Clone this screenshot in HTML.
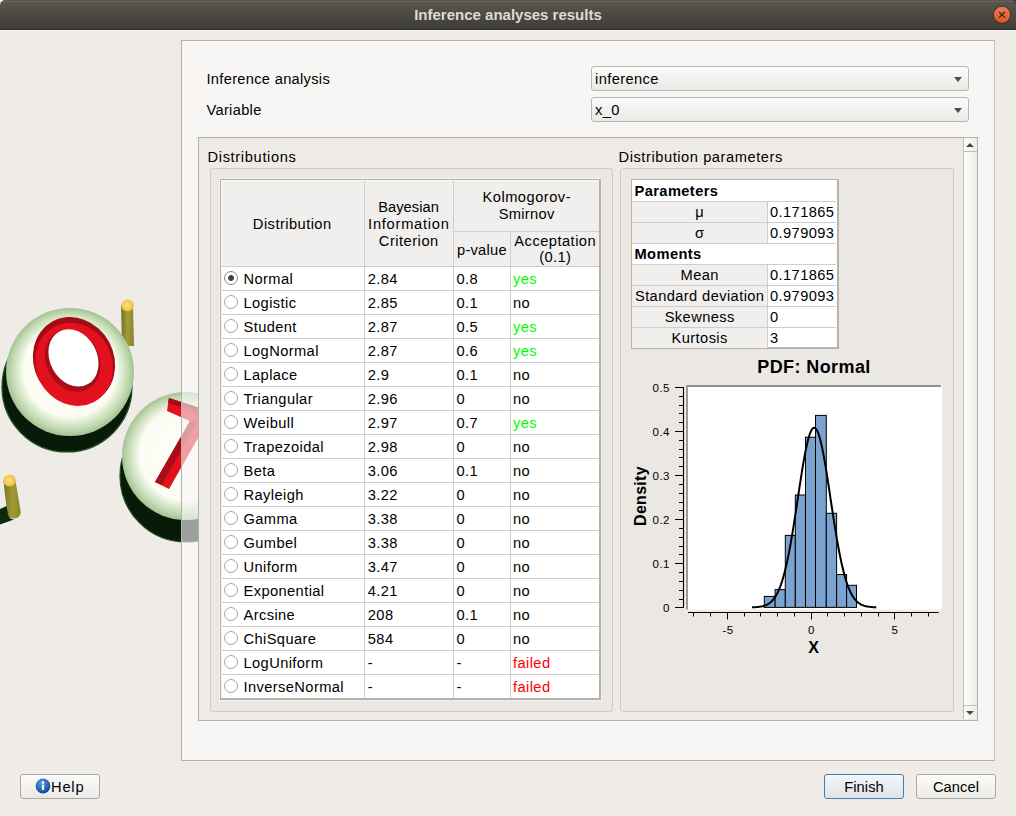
<!DOCTYPE html>
<html><head><meta charset="utf-8"><style>
html,body{margin:0;padding:0;}
body{width:1016px;height:816px;position:relative;overflow:hidden;background:#efebe7;font-family:"Liberation Sans", sans-serif;}
</style></head><body>
<div style="position:absolute;left:1008px;top:0px;width:8px;height:8px;background:#3a3934;"></div>
<div style="position:absolute;left:0;top:0;width:1016px;height:30px;background:linear-gradient(#5b574e,#3e3c37);border-radius:5px 5px 0 0;"></div>
<div style="position:absolute;left:0px;top:0px;width:6px;height:6px;background:#ffffff;z-index:-1"></div>
<div style="position:absolute;left:2px;top:1px;width:1012px;height:1px;background:#67645a;"></div>
<div style="position:absolute;left:0px;top:29px;width:1016px;height:1px;background:#2f2e2b;"></div>
<div style="position:absolute;left:0px;top:30px;width:1016px;height:1px;background:#f6f4f1;"></div>
<div style="position:absolute;left:308.00px;width:400px;text-align:center;text-indent:0.0px;top:6.80px;font-size:15px;line-height:15px;font-weight:700;color:#dfdbd2;white-space:nowrap;">Inference analyses results</div>
<svg style="position:absolute;left:990px;top:3px" width="24" height="24" viewBox="0 0 24 24">
<defs><linearGradient id="cg" x1="0" y1="0" x2="0" y2="1"><stop offset="0" stop-color="#f07a55"/><stop offset="1" stop-color="#e0531f"/></linearGradient></defs>
<circle cx="12" cy="11.8" r="8.9" fill="#2e2d29"/>
<circle cx="12" cy="11.8" r="8.1" fill="url(#cg)"/>
<path d="M9.1 8.9 L14.9 14.7 M14.9 8.9 L9.1 14.7" stroke="#1f2410" stroke-width="1.15"/>
</svg>
<div style="position:absolute;left:181px;top:40px;width:812px;height:719px;border:1px solid #b4b0aa;border-right-color:#c4c0bb;background:#f7f6f5;"></div>
<svg style="position:absolute;left:0;top:30px" width="200" height="700" viewBox="0 30 200 700">
<defs>
<radialGradient id="ballg" cx="0.5" cy="0.5" r="0.5" fx="0.5" fy="0.45">
<stop offset="0" stop-color="#ffffff"/><stop offset="0.62" stop-color="#fbfcf2"/><stop offset="0.72" stop-color="#fdfdf6"/><stop offset="0.8" stop-color="#e2eed5"/><stop offset="0.9" stop-color="#c5dcb4"/><stop offset="1" stop-color="#a3c394"/>
</radialGradient>
<linearGradient id="pegg" x1="0" x2="1"><stop offset="0" stop-color="#7a7420"/><stop offset="0.5" stop-color="#a29a36"/><stop offset="1" stop-color="#8a8628"/></linearGradient>
<radialGradient id="pegtop" cx="0.45" cy="0.45" r="0.6"><stop offset="0" stop-color="#ffe27a"/><stop offset="1" stop-color="#e8b84a"/></radialGradient>
</defs>
<!-- peg 1 -->
<path d="M121 305 L133 305 L134 346 L122 346 Z" fill="url(#pegg)"/>
<ellipse cx="127.5" cy="305.5" rx="6.3" ry="6" fill="url(#pegtop)"/>
<!-- ball 1 -->
<circle cx="67" cy="387" r="65" fill="#081a08" stroke="#1f4f1f" stroke-width="1.2"/>
<circle cx="70" cy="372" r="64" fill="url(#ballg)"/>
<g transform="rotate(-28 74 361)">
<ellipse cx="74" cy="361" rx="40" ry="45" fill="#a30c17"/>
<ellipse cx="72.5" cy="364" rx="38" ry="42.5" fill="#e3111d"/>
<ellipse cx="73" cy="360" rx="26.5" ry="32.5" fill="#a90d18"/>
<ellipse cx="75" cy="358" rx="23.5" ry="30" fill="#ffffff"/>
</g>
<!-- peg 2 -->
<path d="M3.5 481 L15.5 481 L20.8 512 Q20 518.5 14 518.5 Q8 518.5 7 512 Z" fill="url(#pegg)"/>
<path d="M0 509 L6.5 506 L8 514 Q9 519 14 519.5 L0 524.5 Z" fill="#0d2a0d"/>
<ellipse cx="9.5" cy="480.5" rx="6.3" ry="6" fill="url(#pegtop)"/>
<!-- ball 2 -->
<circle cx="186" cy="476" r="66" fill="#081a08" stroke="#1f4f1f" stroke-width="1.2"/>
<circle cx="186" cy="456" r="64" fill="url(#ballg)"/>
<path d="M169 398 L206 410 L206 424 L169 489 L155 482 L190 421 L167 411 Z" fill="#e3111d"/>
<path d="M190 421 L155 482 L162 485 L196 423 Z" fill="#a90d18"/>
<path d="M169 398 L206 410 L206 414 L168 403 Z" fill="#a30c17"/>
</svg>
<div style="position:absolute;left:182px;top:41px;width:16px;height:719px;background:rgba(247,246,245,0.62);"></div>
<div style="position:absolute;left:181px;top:40px;width:1px;height:721px;background:#b4b0aa;"></div>
<div style="position:absolute;left:206.50px;top:71.58px;font-size:14.67px;line-height:14.67px;font-weight:400;color:#000;white-space:nowrap;letter-spacing:0.3px;">Inference analysis</div>
<div style="position:absolute;left:206.50px;top:102.58px;font-size:14.67px;line-height:14.67px;font-weight:400;color:#000;white-space:nowrap;letter-spacing:0.3px;">Variable</div>
<div style="position:absolute;left:591px;top:66px;width:376px;height:23px;border:1px solid #b9b5b0;border-radius:3px;background:linear-gradient(#fbfbfa,#ebe9e6);"></div>
<div style="position:absolute;left:595.00px;top:71.58px;font-size:14.67px;line-height:14.67px;font-weight:400;color:#000;white-space:nowrap;letter-spacing:0.4px;">inference</div>
<div style="position:absolute;left:954px;top:77px;width:0;height:0;border-left:4.5px solid transparent;border-right:4.5px solid transparent;border-top:5px solid #4c4c4c;"></div>
<div style="position:absolute;left:591px;top:97px;width:376px;height:23px;border:1px solid #b9b5b0;border-radius:3px;background:linear-gradient(#fbfbfa,#ebe9e6);"></div>
<div style="position:absolute;left:595.00px;top:102.58px;font-size:14.67px;line-height:14.67px;font-weight:400;color:#000;white-space:nowrap;letter-spacing:0.4px;">x_0</div>
<div style="position:absolute;left:954px;top:108px;width:0;height:0;border-left:4.5px solid transparent;border-right:4.5px solid transparent;border-top:5px solid #4c4c4c;"></div>
<div style="position:absolute;left:198px;top:137px;width:778px;height:582px;border:1px solid #b4b0aa;background:#eeebe7;"></div>
<div style="position:absolute;left:963px;top:138px;width:13px;height:581px;border-left:1px solid #c0bcb7;background:linear-gradient(90deg,#fdfdfd,#eeece9);"></div>
<div style="position:absolute;left:963px;top:151px;width:14px;height:1px;background:#c0bcb7;"></div>
<div style="position:absolute;left:963px;top:705px;width:14px;height:1px;background:#c0bcb7;"></div>
<div style="position:absolute;left:966px;top:143px;width:0;height:0;border-left:4px solid transparent;border-right:4px solid transparent;border-bottom:4px solid #4a4a4a;"></div>
<div style="position:absolute;left:966px;top:711px;width:0;height:0;border-left:4px solid transparent;border-right:4px solid transparent;border-top:4px solid #4a4a4a;"></div>
<div style="position:absolute;left:207.50px;top:150.08px;font-size:14.67px;line-height:14.67px;font-weight:400;color:#000;white-space:nowrap;letter-spacing:0.65px;">Distributions</div>
<div style="position:absolute;left:618.50px;top:150.08px;font-size:14.67px;line-height:14.67px;font-weight:400;color:#000;white-space:nowrap;letter-spacing:0.56px;">Distribution parameters</div>
<div style="position:absolute;left:210px;top:168px;width:401px;height:542px;border:1px solid #d0ccc7;border-radius:3px;background:#ebe8e4;"></div>
<div style="position:absolute;left:620px;top:168px;width:332px;height:542px;border:1px solid #d0ccc7;border-radius:3px;background:#ebe8e4;"></div>
<div style="position:absolute;left:20px;top:774px;width:78px;height:23px;border:1px solid #aca8a3;border-radius:3px;background:linear-gradient(#fbfbfb,#ebe9e6);"></div>
<svg style="position:absolute;left:35px;top:778px" width="16" height="16" viewBox="0 0 16 16">
<defs><radialGradient id="ig" cx="0.4" cy="0.3" r="0.7"><stop offset="0" stop-color="#5a9ae0"/><stop offset="1" stop-color="#0c4a9c"/></radialGradient></defs>
<circle cx="8" cy="8" r="7.4" fill="url(#ig)"/>
<circle cx="8" cy="4.6" r="1.3" fill="#fff"/>
<rect x="6.9" y="6.6" width="2.2" height="5.4" fill="#fff"/>
</svg>
<div style="position:absolute;left:51.00px;top:780.08px;font-size:14.67px;line-height:14.67px;font-weight:400;color:#000;white-space:nowrap;letter-spacing:0.8px;">Help</div>
<div style="position:absolute;left:824px;top:774px;width:78px;height:23px;border:1px solid #3f7fb6;border-radius:3px;background:linear-gradient(#f4f6f8,#dfe4e8);"></div>
<div style="position:absolute;left:824.00px;width:80px;text-align:center;text-indent:0.05px;top:780.08px;font-size:14.67px;line-height:14.67px;font-weight:400;color:#000;white-space:nowrap;letter-spacing:0.05px;">Finish</div>
<div style="position:absolute;left:916px;top:774px;width:78px;height:23px;border:1px solid #aca8a3;border-radius:3px;background:linear-gradient(#fbfbfb,#ebe9e6);"></div>
<div style="position:absolute;left:916.00px;width:80px;text-align:center;text-indent:0.1px;top:780.08px;font-size:14.67px;line-height:14.67px;font-weight:400;color:#000;white-space:nowrap;letter-spacing:0.1px;">Cancel</div>
<div style="position:absolute;left:219px;top:178px;width:383px;height:523px;background:#f4f2ef;"></div>
<div style="position:absolute;left:220px;top:179px;width:378px;height:518px;border:1px solid #b3b0ac;border-width:1px 2px 2px 1px;background:#ffffff;"></div>
<div style="position:absolute;left:221px;top:180px;width:378px;height:1px;background:#f8f7f6;"></div>
<div style="position:absolute;left:221px;top:180px;width:1px;height:518px;background:#f8f7f6;"></div>
<div style="position:absolute;left:222px;top:181px;width:377px;height:85px;background:#f0efee;"></div>
<div style="position:absolute;left:364px;top:181px;width:1px;height:517px;background:#cfccc9;"></div>
<div style="position:absolute;left:453px;top:181px;width:1px;height:517px;background:#cfccc9;"></div>
<div style="position:absolute;left:510px;top:231px;width:1px;height:467px;background:#cfccc9;"></div>
<div style="position:absolute;left:453px;top:231px;width:146px;height:1px;background:#cfccc9;"></div>
<div style="position:absolute;left:222px;top:266px;width:377px;height:1px;background:#cfccc9;"></div>
<div style="position:absolute;left:222px;top:290px;width:377px;height:1px;background:#cfccc9;"></div>
<div style="position:absolute;left:222px;top:314px;width:377px;height:1px;background:#cfccc9;"></div>
<div style="position:absolute;left:222px;top:338px;width:377px;height:1px;background:#cfccc9;"></div>
<div style="position:absolute;left:222px;top:362px;width:377px;height:1px;background:#cfccc9;"></div>
<div style="position:absolute;left:222px;top:386px;width:377px;height:1px;background:#cfccc9;"></div>
<div style="position:absolute;left:222px;top:410px;width:377px;height:1px;background:#cfccc9;"></div>
<div style="position:absolute;left:222px;top:434px;width:377px;height:1px;background:#cfccc9;"></div>
<div style="position:absolute;left:222px;top:458px;width:377px;height:1px;background:#cfccc9;"></div>
<div style="position:absolute;left:222px;top:482px;width:377px;height:1px;background:#cfccc9;"></div>
<div style="position:absolute;left:222px;top:506px;width:377px;height:1px;background:#cfccc9;"></div>
<div style="position:absolute;left:222px;top:530px;width:377px;height:1px;background:#cfccc9;"></div>
<div style="position:absolute;left:222px;top:554px;width:377px;height:1px;background:#cfccc9;"></div>
<div style="position:absolute;left:222px;top:578px;width:377px;height:1px;background:#cfccc9;"></div>
<div style="position:absolute;left:222px;top:602px;width:377px;height:1px;background:#cfccc9;"></div>
<div style="position:absolute;left:222px;top:626px;width:377px;height:1px;background:#cfccc9;"></div>
<div style="position:absolute;left:222px;top:650px;width:377px;height:1px;background:#cfccc9;"></div>
<div style="position:absolute;left:222px;top:674px;width:377px;height:1px;background:#cfccc9;"></div>
<div style="position:absolute;left:222.00px;width:140px;text-align:center;text-indent:0.45px;top:217.08px;font-size:14.67px;line-height:14.67px;font-weight:400;color:#000;white-space:nowrap;letter-spacing:0.45px;">Distribution</div>
<div style="position:absolute;left:363.50px;width:90px;text-align:center;text-indent:0.05px;top:199.58px;font-size:14.67px;line-height:14.67px;font-weight:400;color:#000;white-space:nowrap;letter-spacing:0.05px;">Bayesian</div>
<div style="position:absolute;left:363.50px;width:90px;text-align:center;text-indent:0.75px;top:216.58px;font-size:14.67px;line-height:14.67px;font-weight:400;color:#000;white-space:nowrap;letter-spacing:0.75px;">Information</div>
<div style="position:absolute;left:363.50px;width:90px;text-align:center;text-indent:0.5px;top:234.08px;font-size:14.67px;line-height:14.67px;font-weight:400;color:#000;white-space:nowrap;letter-spacing:0.5px;">Criterion</div>
<div style="position:absolute;left:456.50px;width:140px;text-align:center;text-indent:0.5px;top:190.08px;font-size:14.67px;line-height:14.67px;font-weight:400;color:#000;white-space:nowrap;letter-spacing:0.5px;">Kolmogorov-</div>
<div style="position:absolute;left:456.50px;width:140px;text-align:center;text-indent:0.3px;top:207.08px;font-size:14.67px;line-height:14.67px;font-weight:400;color:#000;white-space:nowrap;letter-spacing:0.3px;">Smirnov</div>
<div style="position:absolute;left:457.00px;top:243.08px;font-size:14.67px;line-height:14.67px;font-weight:400;color:#000;white-space:nowrap;letter-spacing:0.25px;">p-value</div>
<div style="position:absolute;left:510.00px;width:90px;text-align:center;text-indent:0.47px;top:233.58px;font-size:14.67px;line-height:14.67px;font-weight:400;color:#000;white-space:nowrap;letter-spacing:0.47px;">Acceptation</div>
<div style="position:absolute;left:510.00px;width:90px;text-align:center;text-indent:0.4px;top:250.28px;font-size:14.67px;line-height:14.67px;font-weight:400;color:#000;white-space:nowrap;letter-spacing:0.4px;">(0.1)</div>
<div style="position:absolute;left:224px;top:271px;width:14px;height:14px;border-radius:50%;border:1px solid #8a8884;background:radial-gradient(#404040 0,#404040 2.5px,#fff 3.3px);box-sizing:border-box;"></div>
<div style="position:absolute;left:243.50px;top:272.08px;font-size:14.67px;line-height:14.67px;font-weight:400;color:#000;white-space:nowrap;letter-spacing:0.4px;">Normal</div>
<div style="position:absolute;left:367.80px;top:272.08px;font-size:14.67px;line-height:14.67px;font-weight:400;color:#000;white-space:nowrap;letter-spacing:0.4px;">2.84</div>
<div style="position:absolute;left:456.50px;top:272.08px;font-size:14.67px;line-height:14.67px;font-weight:400;color:#000;white-space:nowrap;letter-spacing:0.4px;">0.8</div>
<div style="position:absolute;left:513.00px;top:272.08px;font-size:14.67px;line-height:14.67px;font-weight:400;color:#00ff00;white-space:nowrap;letter-spacing:0.4px;">yes</div>
<div style="position:absolute;left:224px;top:295px;width:14px;height:14px;border-radius:50%;border:1px solid #a6a4a0;background:#fff;box-sizing:border-box;"></div>
<div style="position:absolute;left:243.50px;top:296.08px;font-size:14.67px;line-height:14.67px;font-weight:400;color:#000;white-space:nowrap;letter-spacing:0.4px;">Logistic</div>
<div style="position:absolute;left:367.80px;top:296.08px;font-size:14.67px;line-height:14.67px;font-weight:400;color:#000;white-space:nowrap;letter-spacing:0.4px;">2.85</div>
<div style="position:absolute;left:456.50px;top:296.08px;font-size:14.67px;line-height:14.67px;font-weight:400;color:#000;white-space:nowrap;letter-spacing:0.4px;">0.1</div>
<div style="position:absolute;left:513.00px;top:296.08px;font-size:14.67px;line-height:14.67px;font-weight:400;color:#000;white-space:nowrap;letter-spacing:0.4px;">no</div>
<div style="position:absolute;left:224px;top:319px;width:14px;height:14px;border-radius:50%;border:1px solid #a6a4a0;background:#fff;box-sizing:border-box;"></div>
<div style="position:absolute;left:243.50px;top:320.08px;font-size:14.67px;line-height:14.67px;font-weight:400;color:#000;white-space:nowrap;letter-spacing:0.4px;">Student</div>
<div style="position:absolute;left:367.80px;top:320.08px;font-size:14.67px;line-height:14.67px;font-weight:400;color:#000;white-space:nowrap;letter-spacing:0.4px;">2.87</div>
<div style="position:absolute;left:456.50px;top:320.08px;font-size:14.67px;line-height:14.67px;font-weight:400;color:#000;white-space:nowrap;letter-spacing:0.4px;">0.5</div>
<div style="position:absolute;left:513.00px;top:320.08px;font-size:14.67px;line-height:14.67px;font-weight:400;color:#00ff00;white-space:nowrap;letter-spacing:0.4px;">yes</div>
<div style="position:absolute;left:224px;top:343px;width:14px;height:14px;border-radius:50%;border:1px solid #a6a4a0;background:#fff;box-sizing:border-box;"></div>
<div style="position:absolute;left:243.50px;top:344.08px;font-size:14.67px;line-height:14.67px;font-weight:400;color:#000;white-space:nowrap;letter-spacing:0.4px;">LogNormal</div>
<div style="position:absolute;left:367.80px;top:344.08px;font-size:14.67px;line-height:14.67px;font-weight:400;color:#000;white-space:nowrap;letter-spacing:0.4px;">2.87</div>
<div style="position:absolute;left:456.50px;top:344.08px;font-size:14.67px;line-height:14.67px;font-weight:400;color:#000;white-space:nowrap;letter-spacing:0.4px;">0.6</div>
<div style="position:absolute;left:513.00px;top:344.08px;font-size:14.67px;line-height:14.67px;font-weight:400;color:#00ff00;white-space:nowrap;letter-spacing:0.4px;">yes</div>
<div style="position:absolute;left:224px;top:367px;width:14px;height:14px;border-radius:50%;border:1px solid #a6a4a0;background:#fff;box-sizing:border-box;"></div>
<div style="position:absolute;left:243.50px;top:368.08px;font-size:14.67px;line-height:14.67px;font-weight:400;color:#000;white-space:nowrap;letter-spacing:0.4px;">Laplace</div>
<div style="position:absolute;left:367.80px;top:368.08px;font-size:14.67px;line-height:14.67px;font-weight:400;color:#000;white-space:nowrap;letter-spacing:0.4px;">2.9</div>
<div style="position:absolute;left:456.50px;top:368.08px;font-size:14.67px;line-height:14.67px;font-weight:400;color:#000;white-space:nowrap;letter-spacing:0.4px;">0.1</div>
<div style="position:absolute;left:513.00px;top:368.08px;font-size:14.67px;line-height:14.67px;font-weight:400;color:#000;white-space:nowrap;letter-spacing:0.4px;">no</div>
<div style="position:absolute;left:224px;top:391px;width:14px;height:14px;border-radius:50%;border:1px solid #a6a4a0;background:#fff;box-sizing:border-box;"></div>
<div style="position:absolute;left:243.50px;top:392.08px;font-size:14.67px;line-height:14.67px;font-weight:400;color:#000;white-space:nowrap;letter-spacing:0.4px;">Triangular</div>
<div style="position:absolute;left:367.80px;top:392.08px;font-size:14.67px;line-height:14.67px;font-weight:400;color:#000;white-space:nowrap;letter-spacing:0.4px;">2.96</div>
<div style="position:absolute;left:456.50px;top:392.08px;font-size:14.67px;line-height:14.67px;font-weight:400;color:#000;white-space:nowrap;letter-spacing:0.4px;">0</div>
<div style="position:absolute;left:513.00px;top:392.08px;font-size:14.67px;line-height:14.67px;font-weight:400;color:#000;white-space:nowrap;letter-spacing:0.4px;">no</div>
<div style="position:absolute;left:224px;top:415px;width:14px;height:14px;border-radius:50%;border:1px solid #a6a4a0;background:#fff;box-sizing:border-box;"></div>
<div style="position:absolute;left:243.50px;top:416.08px;font-size:14.67px;line-height:14.67px;font-weight:400;color:#000;white-space:nowrap;letter-spacing:0.4px;">Weibull</div>
<div style="position:absolute;left:367.80px;top:416.08px;font-size:14.67px;line-height:14.67px;font-weight:400;color:#000;white-space:nowrap;letter-spacing:0.4px;">2.97</div>
<div style="position:absolute;left:456.50px;top:416.08px;font-size:14.67px;line-height:14.67px;font-weight:400;color:#000;white-space:nowrap;letter-spacing:0.4px;">0.7</div>
<div style="position:absolute;left:513.00px;top:416.08px;font-size:14.67px;line-height:14.67px;font-weight:400;color:#00ff00;white-space:nowrap;letter-spacing:0.4px;">yes</div>
<div style="position:absolute;left:224px;top:439px;width:14px;height:14px;border-radius:50%;border:1px solid #a6a4a0;background:#fff;box-sizing:border-box;"></div>
<div style="position:absolute;left:243.50px;top:440.08px;font-size:14.67px;line-height:14.67px;font-weight:400;color:#000;white-space:nowrap;letter-spacing:0.4px;">Trapezoidal</div>
<div style="position:absolute;left:367.80px;top:440.08px;font-size:14.67px;line-height:14.67px;font-weight:400;color:#000;white-space:nowrap;letter-spacing:0.4px;">2.98</div>
<div style="position:absolute;left:456.50px;top:440.08px;font-size:14.67px;line-height:14.67px;font-weight:400;color:#000;white-space:nowrap;letter-spacing:0.4px;">0</div>
<div style="position:absolute;left:513.00px;top:440.08px;font-size:14.67px;line-height:14.67px;font-weight:400;color:#000;white-space:nowrap;letter-spacing:0.4px;">no</div>
<div style="position:absolute;left:224px;top:463px;width:14px;height:14px;border-radius:50%;border:1px solid #a6a4a0;background:#fff;box-sizing:border-box;"></div>
<div style="position:absolute;left:243.50px;top:464.08px;font-size:14.67px;line-height:14.67px;font-weight:400;color:#000;white-space:nowrap;letter-spacing:0.4px;">Beta</div>
<div style="position:absolute;left:367.80px;top:464.08px;font-size:14.67px;line-height:14.67px;font-weight:400;color:#000;white-space:nowrap;letter-spacing:0.4px;">3.06</div>
<div style="position:absolute;left:456.50px;top:464.08px;font-size:14.67px;line-height:14.67px;font-weight:400;color:#000;white-space:nowrap;letter-spacing:0.4px;">0.1</div>
<div style="position:absolute;left:513.00px;top:464.08px;font-size:14.67px;line-height:14.67px;font-weight:400;color:#000;white-space:nowrap;letter-spacing:0.4px;">no</div>
<div style="position:absolute;left:224px;top:487px;width:14px;height:14px;border-radius:50%;border:1px solid #a6a4a0;background:#fff;box-sizing:border-box;"></div>
<div style="position:absolute;left:243.50px;top:488.08px;font-size:14.67px;line-height:14.67px;font-weight:400;color:#000;white-space:nowrap;letter-spacing:0.4px;">Rayleigh</div>
<div style="position:absolute;left:367.80px;top:488.08px;font-size:14.67px;line-height:14.67px;font-weight:400;color:#000;white-space:nowrap;letter-spacing:0.4px;">3.22</div>
<div style="position:absolute;left:456.50px;top:488.08px;font-size:14.67px;line-height:14.67px;font-weight:400;color:#000;white-space:nowrap;letter-spacing:0.4px;">0</div>
<div style="position:absolute;left:513.00px;top:488.08px;font-size:14.67px;line-height:14.67px;font-weight:400;color:#000;white-space:nowrap;letter-spacing:0.4px;">no</div>
<div style="position:absolute;left:224px;top:511px;width:14px;height:14px;border-radius:50%;border:1px solid #a6a4a0;background:#fff;box-sizing:border-box;"></div>
<div style="position:absolute;left:243.50px;top:512.08px;font-size:14.67px;line-height:14.67px;font-weight:400;color:#000;white-space:nowrap;letter-spacing:0.4px;">Gamma</div>
<div style="position:absolute;left:367.80px;top:512.08px;font-size:14.67px;line-height:14.67px;font-weight:400;color:#000;white-space:nowrap;letter-spacing:0.4px;">3.38</div>
<div style="position:absolute;left:456.50px;top:512.08px;font-size:14.67px;line-height:14.67px;font-weight:400;color:#000;white-space:nowrap;letter-spacing:0.4px;">0</div>
<div style="position:absolute;left:513.00px;top:512.08px;font-size:14.67px;line-height:14.67px;font-weight:400;color:#000;white-space:nowrap;letter-spacing:0.4px;">no</div>
<div style="position:absolute;left:224px;top:535px;width:14px;height:14px;border-radius:50%;border:1px solid #a6a4a0;background:#fff;box-sizing:border-box;"></div>
<div style="position:absolute;left:243.50px;top:536.08px;font-size:14.67px;line-height:14.67px;font-weight:400;color:#000;white-space:nowrap;letter-spacing:0.4px;">Gumbel</div>
<div style="position:absolute;left:367.80px;top:536.08px;font-size:14.67px;line-height:14.67px;font-weight:400;color:#000;white-space:nowrap;letter-spacing:0.4px;">3.38</div>
<div style="position:absolute;left:456.50px;top:536.08px;font-size:14.67px;line-height:14.67px;font-weight:400;color:#000;white-space:nowrap;letter-spacing:0.4px;">0</div>
<div style="position:absolute;left:513.00px;top:536.08px;font-size:14.67px;line-height:14.67px;font-weight:400;color:#000;white-space:nowrap;letter-spacing:0.4px;">no</div>
<div style="position:absolute;left:224px;top:559px;width:14px;height:14px;border-radius:50%;border:1px solid #a6a4a0;background:#fff;box-sizing:border-box;"></div>
<div style="position:absolute;left:243.50px;top:560.08px;font-size:14.67px;line-height:14.67px;font-weight:400;color:#000;white-space:nowrap;letter-spacing:0.4px;">Uniform</div>
<div style="position:absolute;left:367.80px;top:560.08px;font-size:14.67px;line-height:14.67px;font-weight:400;color:#000;white-space:nowrap;letter-spacing:0.4px;">3.47</div>
<div style="position:absolute;left:456.50px;top:560.08px;font-size:14.67px;line-height:14.67px;font-weight:400;color:#000;white-space:nowrap;letter-spacing:0.4px;">0</div>
<div style="position:absolute;left:513.00px;top:560.08px;font-size:14.67px;line-height:14.67px;font-weight:400;color:#000;white-space:nowrap;letter-spacing:0.4px;">no</div>
<div style="position:absolute;left:224px;top:583px;width:14px;height:14px;border-radius:50%;border:1px solid #a6a4a0;background:#fff;box-sizing:border-box;"></div>
<div style="position:absolute;left:243.50px;top:584.08px;font-size:14.67px;line-height:14.67px;font-weight:400;color:#000;white-space:nowrap;letter-spacing:0.4px;">Exponential</div>
<div style="position:absolute;left:367.80px;top:584.08px;font-size:14.67px;line-height:14.67px;font-weight:400;color:#000;white-space:nowrap;letter-spacing:0.4px;">4.21</div>
<div style="position:absolute;left:456.50px;top:584.08px;font-size:14.67px;line-height:14.67px;font-weight:400;color:#000;white-space:nowrap;letter-spacing:0.4px;">0</div>
<div style="position:absolute;left:513.00px;top:584.08px;font-size:14.67px;line-height:14.67px;font-weight:400;color:#000;white-space:nowrap;letter-spacing:0.4px;">no</div>
<div style="position:absolute;left:224px;top:607px;width:14px;height:14px;border-radius:50%;border:1px solid #a6a4a0;background:#fff;box-sizing:border-box;"></div>
<div style="position:absolute;left:243.50px;top:608.08px;font-size:14.67px;line-height:14.67px;font-weight:400;color:#000;white-space:nowrap;letter-spacing:0.4px;">Arcsine</div>
<div style="position:absolute;left:367.80px;top:608.08px;font-size:14.67px;line-height:14.67px;font-weight:400;color:#000;white-space:nowrap;letter-spacing:0.4px;">208</div>
<div style="position:absolute;left:456.50px;top:608.08px;font-size:14.67px;line-height:14.67px;font-weight:400;color:#000;white-space:nowrap;letter-spacing:0.4px;">0.1</div>
<div style="position:absolute;left:513.00px;top:608.08px;font-size:14.67px;line-height:14.67px;font-weight:400;color:#000;white-space:nowrap;letter-spacing:0.4px;">no</div>
<div style="position:absolute;left:224px;top:631px;width:14px;height:14px;border-radius:50%;border:1px solid #a6a4a0;background:#fff;box-sizing:border-box;"></div>
<div style="position:absolute;left:243.50px;top:632.08px;font-size:14.67px;line-height:14.67px;font-weight:400;color:#000;white-space:nowrap;letter-spacing:0.4px;">ChiSquare</div>
<div style="position:absolute;left:367.80px;top:632.08px;font-size:14.67px;line-height:14.67px;font-weight:400;color:#000;white-space:nowrap;letter-spacing:0.4px;">584</div>
<div style="position:absolute;left:456.50px;top:632.08px;font-size:14.67px;line-height:14.67px;font-weight:400;color:#000;white-space:nowrap;letter-spacing:0.4px;">0</div>
<div style="position:absolute;left:513.00px;top:632.08px;font-size:14.67px;line-height:14.67px;font-weight:400;color:#000;white-space:nowrap;letter-spacing:0.4px;">no</div>
<div style="position:absolute;left:224px;top:655px;width:14px;height:14px;border-radius:50%;border:1px solid #a6a4a0;background:#fff;box-sizing:border-box;"></div>
<div style="position:absolute;left:243.50px;top:656.08px;font-size:14.67px;line-height:14.67px;font-weight:400;color:#000;white-space:nowrap;letter-spacing:0.4px;">LogUniform</div>
<div style="position:absolute;left:367.80px;top:656.08px;font-size:14.67px;line-height:14.67px;font-weight:400;color:#000;white-space:nowrap;letter-spacing:0.4px;">-</div>
<div style="position:absolute;left:456.50px;top:656.08px;font-size:14.67px;line-height:14.67px;font-weight:400;color:#000;white-space:nowrap;letter-spacing:0.4px;">-</div>
<div style="position:absolute;left:513.00px;top:656.08px;font-size:14.67px;line-height:14.67px;font-weight:400;color:#ff0000;white-space:nowrap;letter-spacing:0.4px;">failed</div>
<div style="position:absolute;left:224px;top:679px;width:14px;height:14px;border-radius:50%;border:1px solid #a6a4a0;background:#fff;box-sizing:border-box;"></div>
<div style="position:absolute;left:243.50px;top:680.08px;font-size:14.67px;line-height:14.67px;font-weight:400;color:#000;white-space:nowrap;letter-spacing:0.4px;">InverseNormal</div>
<div style="position:absolute;left:367.80px;top:680.08px;font-size:14.67px;line-height:14.67px;font-weight:400;color:#000;white-space:nowrap;letter-spacing:0.4px;">-</div>
<div style="position:absolute;left:456.50px;top:680.08px;font-size:14.67px;line-height:14.67px;font-weight:400;color:#000;white-space:nowrap;letter-spacing:0.4px;">-</div>
<div style="position:absolute;left:513.00px;top:680.08px;font-size:14.67px;line-height:14.67px;font-weight:400;color:#ff0000;white-space:nowrap;letter-spacing:0.4px;">failed</div>
<div style="position:absolute;left:631px;top:179px;width:205px;height:167px;border:1px solid #b6b2ad;border-width:1px 2px 2px 1px;background:#ffffff;"></div>
<div style="position:absolute;left:634.50px;top:183.88px;font-size:14.67px;line-height:14.67px;font-weight:700;color:#000;white-space:nowrap;letter-spacing:0.4px;">Parameters</div>
<div style="position:absolute;left:632px;top:201px;width:204px;height:1px;background:#cfccc9;"></div>
<div style="position:absolute;left:632px;top:202px;width:135px;height:20px;background:#f0efee;"></div>
<div style="position:absolute;left:767px;top:202px;width:1px;height:20px;background:#cfccc9;"></div>
<div style="position:absolute;left:629.50px;width:140px;text-align:center;text-indent:0.4px;top:204.88px;font-size:14.67px;line-height:14.67px;font-weight:400;color:#000;white-space:nowrap;letter-spacing:0.4px;">μ</div>
<div style="position:absolute;left:770.00px;top:204.88px;font-size:14.67px;line-height:14.67px;font-weight:400;color:#000;white-space:nowrap;letter-spacing:0.4px;">0.171865</div>
<div style="position:absolute;left:632px;top:222px;width:204px;height:1px;background:#cfccc9;"></div>
<div style="position:absolute;left:632px;top:223px;width:135px;height:20px;background:#f0efee;"></div>
<div style="position:absolute;left:767px;top:223px;width:1px;height:20px;background:#cfccc9;"></div>
<div style="position:absolute;left:629.50px;width:140px;text-align:center;text-indent:0.4px;top:225.88px;font-size:14.67px;line-height:14.67px;font-weight:400;color:#000;white-space:nowrap;letter-spacing:0.4px;">σ</div>
<div style="position:absolute;left:770.00px;top:225.88px;font-size:14.67px;line-height:14.67px;font-weight:400;color:#000;white-space:nowrap;letter-spacing:0.4px;">0.979093</div>
<div style="position:absolute;left:632px;top:243px;width:204px;height:1px;background:#cfccc9;"></div>
<div style="position:absolute;left:634.50px;top:246.88px;font-size:14.67px;line-height:14.67px;font-weight:700;color:#000;white-space:nowrap;letter-spacing:0.4px;">Moments</div>
<div style="position:absolute;left:632px;top:264px;width:204px;height:1px;background:#cfccc9;"></div>
<div style="position:absolute;left:632px;top:265px;width:135px;height:20px;background:#f0efee;"></div>
<div style="position:absolute;left:767px;top:265px;width:1px;height:20px;background:#cfccc9;"></div>
<div style="position:absolute;left:629.50px;width:140px;text-align:center;text-indent:0.4px;top:267.88px;font-size:14.67px;line-height:14.67px;font-weight:400;color:#000;white-space:nowrap;letter-spacing:0.4px;">Mean</div>
<div style="position:absolute;left:770.00px;top:267.88px;font-size:14.67px;line-height:14.67px;font-weight:400;color:#000;white-space:nowrap;letter-spacing:0.4px;">0.171865</div>
<div style="position:absolute;left:632px;top:285px;width:204px;height:1px;background:#cfccc9;"></div>
<div style="position:absolute;left:632px;top:286px;width:135px;height:20px;background:#f0efee;"></div>
<div style="position:absolute;left:767px;top:286px;width:1px;height:20px;background:#cfccc9;"></div>
<div style="position:absolute;left:629.50px;width:140px;text-align:center;text-indent:0.4px;top:288.88px;font-size:14.67px;line-height:14.67px;font-weight:400;color:#000;white-space:nowrap;letter-spacing:0.4px;">Standard deviation</div>
<div style="position:absolute;left:770.00px;top:288.88px;font-size:14.67px;line-height:14.67px;font-weight:400;color:#000;white-space:nowrap;letter-spacing:0.4px;">0.979093</div>
<div style="position:absolute;left:632px;top:306px;width:204px;height:1px;background:#cfccc9;"></div>
<div style="position:absolute;left:632px;top:307px;width:135px;height:20px;background:#f0efee;"></div>
<div style="position:absolute;left:767px;top:307px;width:1px;height:20px;background:#cfccc9;"></div>
<div style="position:absolute;left:629.50px;width:140px;text-align:center;text-indent:0.4px;top:309.88px;font-size:14.67px;line-height:14.67px;font-weight:400;color:#000;white-space:nowrap;letter-spacing:0.4px;">Skewness</div>
<div style="position:absolute;left:770.00px;top:309.88px;font-size:14.67px;line-height:14.67px;font-weight:400;color:#000;white-space:nowrap;letter-spacing:0.4px;">0</div>
<div style="position:absolute;left:632px;top:327px;width:204px;height:1px;background:#cfccc9;"></div>
<div style="position:absolute;left:632px;top:328px;width:135px;height:20px;background:#f0efee;"></div>
<div style="position:absolute;left:767px;top:328px;width:1px;height:20px;background:#cfccc9;"></div>
<div style="position:absolute;left:629.50px;width:140px;text-align:center;text-indent:0.4px;top:330.88px;font-size:14.67px;line-height:14.67px;font-weight:400;color:#000;white-space:nowrap;letter-spacing:0.4px;">Kurtosis</div>
<div style="position:absolute;left:770.00px;top:330.88px;font-size:14.67px;line-height:14.67px;font-weight:400;color:#000;white-space:nowrap;letter-spacing:0.4px;">3</div>
<svg style="position:absolute;left:620px;top:350px" width="333" height="320" viewBox="620 350 333 320">
<rect x="686" y="385" width="256" height="226" fill="#ffffff"/>
<rect x="686" y="385" width="255" height="2" fill="#93918d"/>
<rect x="686" y="385" width="2" height="225" fill="#9d9b97"/>
<rect x="686" y="609.5" width="256" height="1" fill="#e6e4e1"/>
<path d="M683.5 387 L683.5 608" stroke="#000" stroke-width="1.1"/>
<path d="M675.0 607.5 L683.5 607.5" stroke="#000" stroke-width="1"/>
<path d="M679.0 599.5 L683.5 599.5" stroke="#000" stroke-width="1"/>
<path d="M679.0 590.5 L683.5 590.5" stroke="#000" stroke-width="1"/>
<path d="M679.0 581.5 L683.5 581.5" stroke="#000" stroke-width="1"/>
<path d="M679.0 572.5 L683.5 572.5" stroke="#000" stroke-width="1"/>
<path d="M675.0 563.5 L683.5 563.5" stroke="#000" stroke-width="1"/>
<path d="M679.0 554.5 L683.5 554.5" stroke="#000" stroke-width="1"/>
<path d="M679.0 546.5 L683.5 546.5" stroke="#000" stroke-width="1"/>
<path d="M679.0 537.5 L683.5 537.5" stroke="#000" stroke-width="1"/>
<path d="M679.0 528.5 L683.5 528.5" stroke="#000" stroke-width="1"/>
<path d="M675.0 519.5 L683.5 519.5" stroke="#000" stroke-width="1"/>
<path d="M679.0 510.5 L683.5 510.5" stroke="#000" stroke-width="1"/>
<path d="M679.0 502.5 L683.5 502.5" stroke="#000" stroke-width="1"/>
<path d="M679.0 493.5 L683.5 493.5" stroke="#000" stroke-width="1"/>
<path d="M679.0 484.5 L683.5 484.5" stroke="#000" stroke-width="1"/>
<path d="M675.0 475.5 L683.5 475.5" stroke="#000" stroke-width="1"/>
<path d="M679.0 466.5 L683.5 466.5" stroke="#000" stroke-width="1"/>
<path d="M679.0 457.5 L683.5 457.5" stroke="#000" stroke-width="1"/>
<path d="M679.0 449.5 L683.5 449.5" stroke="#000" stroke-width="1"/>
<path d="M679.0 440.5 L683.5 440.5" stroke="#000" stroke-width="1"/>
<path d="M675.0 431.5 L683.5 431.5" stroke="#000" stroke-width="1"/>
<path d="M679.0 422.5 L683.5 422.5" stroke="#000" stroke-width="1"/>
<path d="M679.0 413.5 L683.5 413.5" stroke="#000" stroke-width="1"/>
<path d="M679.0 405.5 L683.5 405.5" stroke="#000" stroke-width="1"/>
<path d="M679.0 396.5 L683.5 396.5" stroke="#000" stroke-width="1"/>
<path d="M675.0 387.5 L683.5 387.5" stroke="#000" stroke-width="1"/>
<path d="M688 612.5 L938.6 612.5" stroke="#000" stroke-width="1.1"/>
<path d="M693.5 612 L693.5 616.5" stroke="#000" stroke-width="1"/>
<path d="M710.5 612 L710.5 616.5" stroke="#000" stroke-width="1"/>
<path d="M727.5 612 L727.5 619.5" stroke="#000" stroke-width="1"/>
<path d="M744.5 612 L744.5 616.5" stroke="#000" stroke-width="1"/>
<path d="M760.5 612 L760.5 616.5" stroke="#000" stroke-width="1"/>
<path d="M777.5 612 L777.5 616.5" stroke="#000" stroke-width="1"/>
<path d="M794.5 612 L794.5 616.5" stroke="#000" stroke-width="1"/>
<path d="M811.5 612 L811.5 619.5" stroke="#000" stroke-width="1"/>
<path d="M827.5 612 L827.5 616.5" stroke="#000" stroke-width="1"/>
<path d="M844.5 612 L844.5 616.5" stroke="#000" stroke-width="1"/>
<path d="M861.5 612 L861.5 616.5" stroke="#000" stroke-width="1"/>
<path d="M878.5 612 L878.5 616.5" stroke="#000" stroke-width="1"/>
<path d="M894.5 612 L894.5 619.5" stroke="#000" stroke-width="1"/>
<path d="M911.5 612 L911.5 616.5" stroke="#000" stroke-width="1"/>
<path d="M928.5 612 L928.5 616.5" stroke="#000" stroke-width="1"/>
<rect x="764.3" y="596.4" width="10.8" height="11.0" fill="#7ba3d0" stroke="#000" stroke-width="1"/>
<rect x="775.1" y="589.6" width="10.2" height="17.8" fill="#7ba3d0" stroke="#000" stroke-width="1"/>
<rect x="785.3" y="535.4" width="10.0" height="72.0" fill="#7ba3d0" stroke="#000" stroke-width="1"/>
<rect x="795.3" y="495.0" width="10.2" height="112.4" fill="#7ba3d0" stroke="#000" stroke-width="1"/>
<rect x="805.5" y="437.2" width="10.0" height="170.2" fill="#7ba3d0" stroke="#000" stroke-width="1"/>
<rect x="815.5" y="415.4" width="10.8" height="192.0" fill="#7ba3d0" stroke="#000" stroke-width="1"/>
<rect x="826.3" y="513.3" width="10.3" height="94.1" fill="#7ba3d0" stroke="#000" stroke-width="1"/>
<rect x="836.6" y="574.5" width="10.0" height="32.9" fill="#7ba3d0" stroke="#000" stroke-width="1"/>
<rect x="846.6" y="585.3" width="9.9" height="22.1" fill="#7ba3d0" stroke="#000" stroke-width="1"/>
<polyline points="752.04,607.27 753.07,607.23 754.11,607.19 755.14,607.13 756.18,607.07 757.21,606.98 758.25,606.88 759.29,606.76 760.32,606.61 761.36,606.42 762.39,606.21 763.43,605.94 764.46,605.63 765.50,605.26 766.53,604.82 767.57,604.30 768.61,603.70 769.64,602.99 770.68,602.18 771.71,601.23 772.75,600.14 773.78,598.89 774.82,597.47 775.85,595.86 776.89,594.04 777.93,592.00 778.96,589.71 780.00,587.17 781.03,584.35 782.07,581.25 783.10,577.85 784.14,574.13 785.17,570.10 786.21,565.75 787.25,561.08 788.28,556.10 789.32,550.80 790.35,545.20 791.39,539.33 792.42,533.20 793.46,526.84 794.49,520.28 795.53,513.57 796.57,506.75 797.60,499.87 798.64,492.97 799.67,486.11 800.71,479.37 801.74,472.78 802.78,466.43 803.81,460.36 804.85,454.65 805.89,449.36 806.92,444.53 807.96,440.23 808.99,436.50 810.03,433.38 811.06,430.92 812.10,429.15 813.13,428.07 814.17,427.71 815.21,428.07 816.24,429.15 817.28,430.92 818.31,433.38 819.35,436.50 820.38,440.23 821.42,444.53 822.45,449.36 823.49,454.65 824.53,460.36 825.56,466.43 826.60,472.78 827.63,479.37 828.67,486.11 829.70,492.97 830.74,499.87 831.77,506.75 832.81,513.57 833.85,520.28 834.88,526.84 835.92,533.20 836.95,539.33 837.99,545.20 839.02,550.80 840.06,556.10 841.09,561.08 842.13,565.75 843.17,570.10 844.20,574.13 845.24,577.85 846.27,581.25 847.31,584.35 848.34,587.17 849.38,589.71 850.41,592.00 851.45,594.04 852.49,595.86 853.52,597.47 854.56,598.89 855.59,600.14 856.63,601.23 857.66,602.18 858.70,602.99 859.73,603.70 860.77,604.30 861.81,604.82 862.84,605.26 863.88,605.63 864.91,605.94 865.95,606.21 866.98,606.42 868.02,606.61 869.05,606.76 870.09,606.88 871.13,606.98 872.16,607.07 873.20,607.13 874.23,607.19 875.27,607.23 876.30,607.27" fill="none" stroke="#000" stroke-width="2"/>
</svg>
<div style="position:absolute;left:630.00px;width:40px;text-align:right;top:603.47px;font-size:11.5px;line-height:11.5px;font-weight:400;color:#000;white-space:nowrap;letter-spacing:0.5px;">0</div>
<div style="position:absolute;left:630.00px;width:40px;text-align:right;top:559.37px;font-size:11.5px;line-height:11.5px;font-weight:400;color:#000;white-space:nowrap;letter-spacing:0.5px;">0.1</div>
<div style="position:absolute;left:630.00px;width:40px;text-align:right;top:515.27px;font-size:11.5px;line-height:11.5px;font-weight:400;color:#000;white-space:nowrap;letter-spacing:0.5px;">0.2</div>
<div style="position:absolute;left:630.00px;width:40px;text-align:right;top:471.17px;font-size:11.5px;line-height:11.5px;font-weight:400;color:#000;white-space:nowrap;letter-spacing:0.5px;">0.3</div>
<div style="position:absolute;left:630.00px;width:40px;text-align:right;top:427.07px;font-size:11.5px;line-height:11.5px;font-weight:400;color:#000;white-space:nowrap;letter-spacing:0.5px;">0.4</div>
<div style="position:absolute;left:630.00px;width:40px;text-align:right;top:382.97px;font-size:11.5px;line-height:11.5px;font-weight:400;color:#000;white-space:nowrap;letter-spacing:0.5px;">0.5</div>
<div style="position:absolute;left:712.80px;width:30px;text-align:center;text-indent:0.4px;top:625.07px;font-size:11.5px;line-height:11.5px;font-weight:400;color:#000;white-space:nowrap;letter-spacing:0.4px;">-5</div>
<div style="position:absolute;left:796.30px;width:30px;text-align:center;text-indent:0.4px;top:625.07px;font-size:11.5px;line-height:11.5px;font-weight:400;color:#000;white-space:nowrap;letter-spacing:0.4px;">0</div>
<div style="position:absolute;left:879.80px;width:30px;text-align:center;text-indent:0.4px;top:625.07px;font-size:11.5px;line-height:11.5px;font-weight:400;color:#000;white-space:nowrap;letter-spacing:0.4px;">5</div>
<div style="position:absolute;left:757.30px;top:357.76px;font-size:18px;line-height:18px;font-weight:700;color:#000;white-space:nowrap;letter-spacing:0.4px;">PDF: Normal</div>
<div style="position:absolute;left:798.50px;width:30px;text-align:center;text-indent:0px;top:639.96px;font-size:16px;line-height:16px;font-weight:700;color:#000;white-space:nowrap;">X</div>
<div style="position:absolute;left:600.5px;top:487px;width:80px;height:18px;line-height:18px;text-align:center;font-size:16px;font-weight:700;letter-spacing:0.3px;transform:rotate(-90deg);transform-origin:40px 9px;white-space:nowrap;">Density</div>
</body></html>
